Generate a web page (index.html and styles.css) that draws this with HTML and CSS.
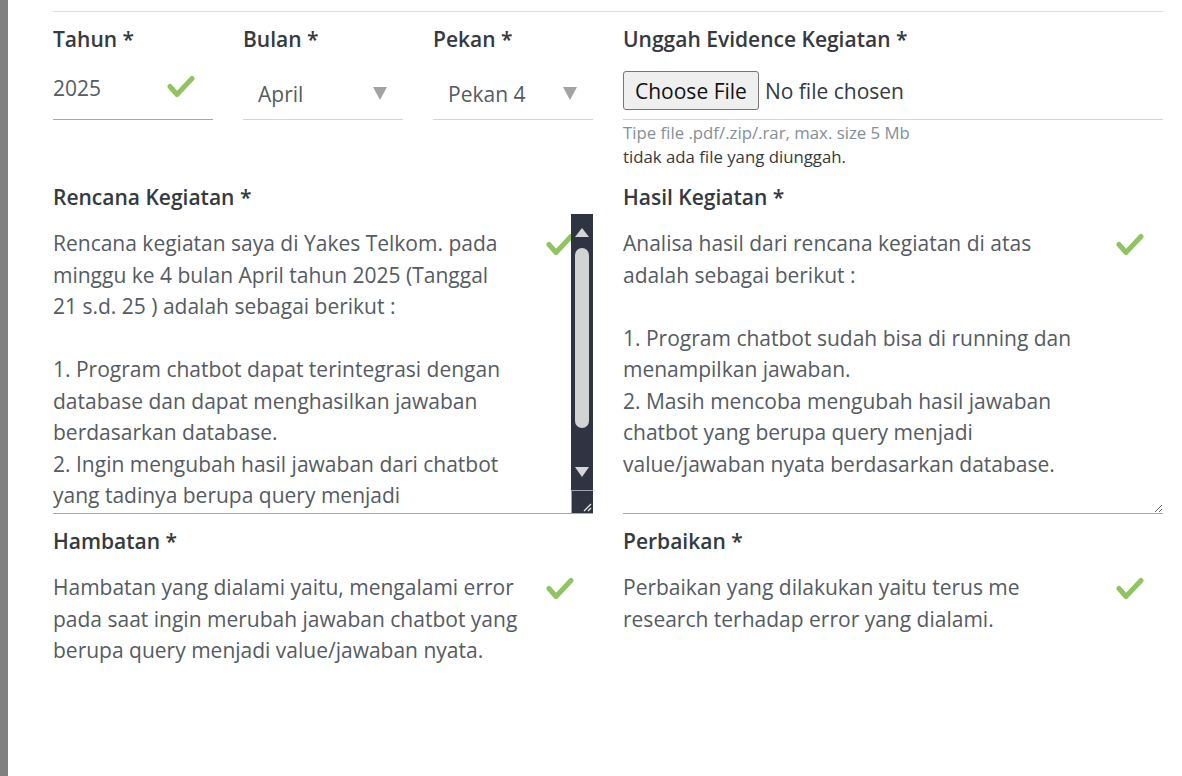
FILE: index.html
```html
<!DOCTYPE html>
<html lang="id">
<head>
<meta charset="utf-8">
<title>Form Kegiatan</title>
<link rel="stylesheet" href="styles.css">
</head>
<body>
<div class="page">
  <div class="edge"></div>
  <main class="main">
    <div class="divider"></div>

    <div class="row-top">
      <div class="field">
        <label class="lbl">Tahun *</label>
        <div class="box ok">
          <input class="inp" type="text" value="2025">
          <svg class="check" viewBox="0 0 28 24"><path d="M3 11.5 L10 19.5 L25 3.5"/></svg>
        </div>
      </div>
      <div class="field">
        <label class="lbl">Bulan *</label>
        <div class="box">
          <select class="sel"><option>April</option></select>
          <span class="caret"></span>
        </div>
      </div>
      <div class="field">
        <label class="lbl">Pekan *</label>
        <div class="box">
          <select class="sel"><option>Pekan 4</option></select>
          <span class="caret"></span>
        </div>
      </div>
      <div class="field">
        <label class="lbl">Unggah Evidence Kegiatan *</label>
        <div class="box file-box">
          <input class="file" type="file">
        </div>
        <div class="help">Tipe file .pdf/.zip/.rar, max. size 5 Mb</div>
        <div class="status">tidak ada file yang diunggah.</div>
      </div>
    </div>

    <div class="row-half row-2">
      <div class="field">
        <label class="lbl">Rencana Kegiatan *</label>
        <div class="ta-box ok">
          <textarea class="ta ta-clip">Rencana kegiatan saya di Yakes Telkom. pada minggu ke 4 bulan April tahun 2025 (Tanggal 21 s.d. 25 ) adalah sebagai berikut :

1. Program chatbot dapat terintegrasi dengan database dan dapat menghasilkan jawaban berdasarkan database.
2. Ingin mengubah hasil jawaban dari chatbot yang tadinya berupa query menjadi value/jawaban nyata berdasarkan database.</textarea>
          <svg class="check" viewBox="0 0 28 24"><path d="M3 11.5 L10 19.5 L25 3.5"/></svg>
          <div class="sb">
            <span class="sb-up"></span>
            <span class="sb-thumb"></span>
            <span class="sb-down"></span>
            <span class="sb-corner">
              <svg class="grip" viewBox="0 0 10 10"><path d="M2 9 L9 2 M6 9 L9 6"/></svg>
            </span>
          </div>
        </div>
      </div>
      <div class="field">
        <label class="lbl">Hasil Kegiatan *</label>
        <div class="ta-box ok">
          <textarea class="ta">Analisa hasil dari rencana kegiatan di atas adalah sebagai berikut :

1. Program chatbot sudah bisa di running dan menampilkan jawaban.
2. Masih mencoba mengubah hasil jawaban chatbot yang berupa query menjadi value/jawaban nyata berdasarkan database.</textarea>
          <svg class="check" viewBox="0 0 28 24"><path d="M3 11.5 L10 19.5 L25 3.5"/></svg>
        </div>
      </div>
    </div>

    <div class="row-half row-3">
      <div class="field">
        <label class="lbl">Hambatan *</label>
        <div class="ta-box ok">
          <textarea class="ta">Hambatan yang dialami yaitu, mengalami error pada saat ingin merubah jawaban chatbot yang berupa query menjadi value/jawaban nyata.</textarea>
          <svg class="check" viewBox="0 0 28 24"><path d="M3 11.5 L10 19.5 L25 3.5"/></svg>
        </div>
      </div>
      <div class="field">
        <label class="lbl">Perbaikan *</label>
        <div class="ta-box ok">
          <textarea class="ta">Perbaikan yang dilakukan yaitu terus me research terhadap error yang dialami.</textarea>
          <svg class="check" viewBox="0 0 28 24"><path d="M3 11.5 L10 19.5 L25 3.5"/></svg>
        </div>
      </div>
    </div>
  </main>
</div>
</body>
</html>
```

FILE: styles.css
```css
html, body {
  margin: 0;
  height: 100%;
  overflow: hidden;
  background: #ffffff;
}

body {
  font-family: "Open Sans", "Liberation Sans", sans-serif;
}

.page {
  display: flex;
  height: 100vh;
}

.edge {
  flex: none;
  width: 8px;
  background: #808080;
}

.main {
  flex: 1;
  min-width: 0;
  padding: 11px 19px 0 45px;
}

.divider {
  height: 1px;
  background: #dcdce1;
}

.row-top {
  display: grid;
  grid-template-columns: 160px 160px 160px 1fr;
  column-gap: 30px;
  align-items: start;
  margin-top: 12px;
}

.row-half {
  display: grid;
  grid-template-columns: 1fr 1fr;
  column-gap: 30px;
  align-items: start;
}

.row-2 { margin-top: 14px; }
.row-3 { margin-top: 12px; }

.lbl {
  display: block;
  font-size: 21px;
  font-weight: 600;
  line-height: 30px;
  margin-bottom: -2px;
  color: #343a40;
}

.box {
  position: relative;
  height: 68px;
  box-sizing: border-box;
  border-bottom: 1px solid #d4d4d4;
}

.box.ok,
.ta-box.ok {
  border-bottom-color: #8fc461;
}

.inp {
  display: block;
  width: 100%;
  height: 67px;
  box-sizing: border-box;
  border: 0;
  outline: none;
  background: transparent;
  padding: 5px 50px 0 0;
  font-family: "Open Sans", sans-serif;
  font-size: 21px;
  color: #555b62;
}

.sel {
  display: block;
  width: 100%;
  height: 67px;
  box-sizing: border-box;
  border: 0;
  outline: none;
  background: transparent;
  -webkit-appearance: none;
  appearance: none;
  padding: 16px 40px 0 15px;
  font-family: "Open Sans", sans-serif;
  font-size: 21px;
  color: #555b62;
}

.caret {
  position: absolute;
  top: 35px;
  right: 16px;
  width: 0;
  height: 0;
  border-left: 7.5px solid transparent;
  border-right: 7.5px solid transparent;
  border-top: 13px solid #a3a3a3;
  pointer-events: none;
}

.file-box {
  padding-top: 19px;
}

.file {
  display: block;
  height: 39px;
  font-family: "Open Sans", sans-serif;
  font-size: 21px;
  line-height: 28px;
  color: #343a40;
}

.file::file-selector-button {
  font: inherit;
  color: #111;
  height: 39px;
  padding: 0 11px;
  margin: 0 6px 0 0;
  border: 1px solid #767676;
  border-radius: 3px;
  background: #efefef;
}

.help {
  padding-top: 1px;
  font-size: 16.8px;
  line-height: 24px;
  color: #868e96;
}

.status {
  font-size: 16.8px;
  line-height: 23px;
  color: #343a40;
}

.check {
  position: absolute;
  top: 23px;
  right: 18px;
  width: 28px;
  height: 24px;
  fill: none;
  stroke: #8fc461;
  stroke-width: 5;
  stroke-linecap: round;
  stroke-linejoin: round;
}

.ta-box {
  position: relative;
  display: flex;
  height: 300px;
  box-sizing: border-box;
  margin-top: 4px;
  border-bottom: 1px solid #d4d4d4;
}

.ta-box .check {
  top: 19px;
  right: 19px;
}

.ta {
  flex: 1;
  min-width: 0;
  height: 100%;
  box-sizing: border-box;
  margin: 0;
  border: 0;
  outline: none;
  background: transparent;
  padding: 14px 67px 0 0;
  font-family: "Open Sans", sans-serif;
  font-size: 21px;
  line-height: 31.5px;
  color: #555b62;
  resize: vertical;
}

.ta-clip {
  overflow: hidden;
  resize: none;
}

.sb {
  position: relative;
  z-index: 1;
  flex: none;
  width: 22px;
  display: flex;
  flex-direction: column;
  align-items: center;
  background: #2e3442;
}

.sb-up {
  margin-top: 14px;
  width: 0;
  height: 0;
  border-left: 7px solid transparent;
  border-right: 7px solid transparent;
  border-bottom: 9px solid #d6d6d6;
}

.sb-thumb {
  margin-top: 11px;
  width: 14px;
  height: 180px;
  border-radius: 7px;
  background: #d3d3d3;
}

.sb-down {
  margin-top: 39px;
  width: 0;
  height: 0;
  border-left: 7px solid transparent;
  border-right: 7px solid transparent;
  border-top: 10px solid #d6d6d6;
}

.sb-corner {
  margin-top: auto;
  align-self: stretch;
  height: 23px;
  box-sizing: border-box;
  border-top: 1px solid #a0a5ad;
  border-left: 1px solid #a0a5ad;
  display: flex;
  align-items: flex-end;
  justify-content: flex-end;
}

.grip {
  width: 10px;
  height: 10px;
  margin: 0 1px 1px 0;
  fill: none;
  stroke: #e6e6e6;
  stroke-width: 1.3;
}
```
